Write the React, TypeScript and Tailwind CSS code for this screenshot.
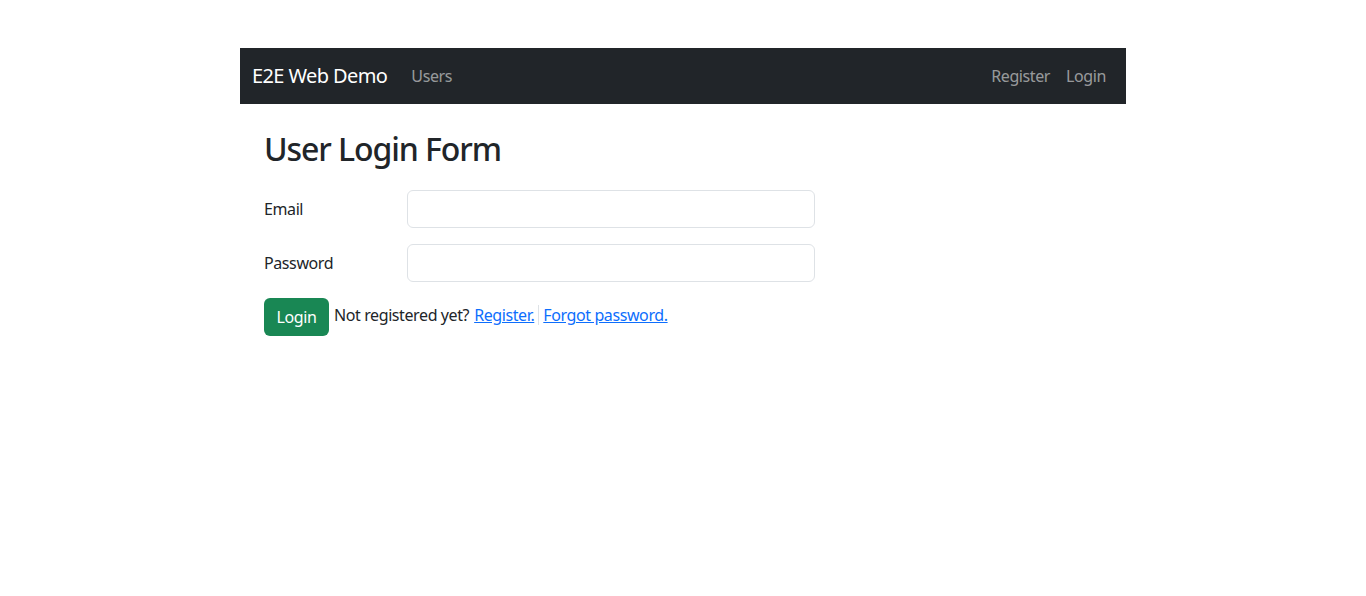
export default function App() {
  return (
    <div className="min-h-[596px] bg-white text-[#212529] tracking-[-0.025em]" style={{ fontFamily: '"Noto Sans", "Liberation Sans", sans-serif' }}>
      <div className="h-[48px]" />
      <div className="w-[886px] mx-auto">
        <nav className="h-[56px] bg-[#212529] flex items-center px-[12px]">
          <span className="text-[20px] text-white mr-[16px] leading-[30px] tracking-[-0.03em]">E2E Web Demo</span>
          <span className="text-[16px] text-[#ffffff8c] px-[8px]">Users</span>
          <div className="ml-auto flex items-center">
            <span className="text-[16px] text-[#ffffff8c] px-[8px]">Register</span>
            <span className="text-[16px] text-[#ffffff8c] px-[8px]">Login</span>
          </div>
        </nav>
        <div className="px-[24px] pt-[26px]">
          <h2 className="text-[32px] font-medium leading-[1.2] mb-[22px] tracking-[-0.034em]">User Login Form</h2>
          <div className="flex items-center mb-[16px]">
            <label className="w-[143px] text-[16px]">Email</label>
            <input className="w-[408px] h-[38px] border border-[#dee2e6] rounded-[6px] px-[12px] outline-none" />
          </div>
          <div className="flex items-center mb-[16px]">
            <label className="w-[143px] text-[16px]">Password</label>
            <input type="password" className="w-[408px] h-[38px] border border-[#dee2e6] rounded-[6px] px-[12px] outline-none" />
          </div>
          <div className="flex items-center">
            <button className="h-[38px] w-[65px] bg-[#198754] text-white rounded-[6px] text-[16px]">Login</button>
            <div className="flex items-center mb-[4px] text-[16px]">
              <span className="ml-[5px]">Not registered yet?</span>
              <a href="#" className="ml-[5px] text-[#0d6efd] underline">Register.</a>
              <span className="mx-[4px] w-px h-[20px] bg-[#dee2e6]" />
              <a href="#" className="text-[#0d6efd] underline">Forgot password.</a>
            </div>
          </div>
        </div>
      </div>
    </div>
  );
}
